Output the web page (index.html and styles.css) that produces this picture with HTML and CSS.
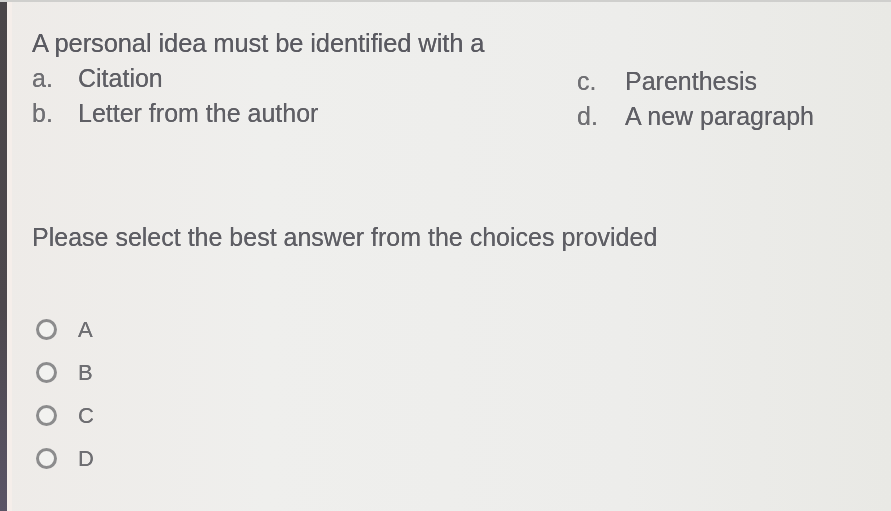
FILE: index.html
```html
<!DOCTYPE html>
<html lang="en">
<head>
<meta charset="utf-8">
<title>Question</title>
<link rel="stylesheet" href="styles.css">
</head>
<body>
<div class="frame">
  <div class="edge-dark"></div>
  <div class="edge-light"></div>
  <main class="main">
    <p class="question">A personal idea must be identified with a</p>
    <div class="options">
      <div class="col">
        <div class="opt"><span class="letter">a.</span><span class="text">Citation</span></div>
        <div class="opt"><span class="letter">b.</span><span class="text">Letter from the author</span></div>
      </div>
      <div class="col col-right">
        <div class="opt"><span class="letter">c.</span><span class="text">Parenthesis</span></div>
        <div class="opt"><span class="letter">d.</span><span class="text">A new paragraph</span></div>
      </div>
    </div>
    <p class="prompt">Please select the best answer from the choices provided</p>
    <ul class="choices">
      <li class="choice"><span class="radio"></span><span class="choice-label">A</span></li>
      <li class="choice"><span class="radio"></span><span class="choice-label">B</span></li>
      <li class="choice"><span class="radio"></span><span class="choice-label">C</span></li>
      <li class="choice"><span class="radio"></span><span class="choice-label">D</span></li>
    </ul>
  </main>
</div>
</body>
</html>
```
FILE: styles.css
```css
html, body {
  margin: 0;
  padding: 0;
}
body {
  width: 891px;
  height: 511px;
  overflow: hidden;
  background: #ecece9;
  font-family: "Liberation Sans", Arial, sans-serif;
}
.frame {
  display: flex;
  height: 511px;
  border-top: 2px solid #cfcfcd;
  box-sizing: border-box;
  background: linear-gradient(90deg, #eeebe8 0%, #efefed 30%, #ededeb 70%, #e9e9e5 100%);
}
.edge-dark {
  width: 7px;
  flex: none;
  background: linear-gradient(180deg, #4a4548 0%, #4d474c 60%, #5a5466 100%);
}
.edge-light {
  width: 5px;
  flex: none;
  background: #f5eeea;
}
.main {
  flex: 1;
  padding: 24px 0 0 20px;
  color: #5a5a61;
  filter: blur(0.5px);
  text-shadow: 0 0 0.6px currentColor;
}
.question {
  margin: 0;
  font-size: 25.5px;
  line-height: 35px;
  letter-spacing: -0.1px;
}
.options {
  display: grid;
  grid-template-columns: 545px 1fr;
}
.col-right {
  padding-top: 3px;
}
.opt {
  display: flex;
  font-size: 25px;
  line-height: 35px;
  color: #5f5f65;
}
.letter {
  width: 46px;
  flex: none;
  color: #707074;
}
.col-right .letter {
  width: 48px;
}
.prompt {
  margin: 86px 0 0;
  font-size: 25px;
  line-height: 35px;
  color: #5e5e64;
}
.choices {
  list-style: none;
  margin: 53px 0 0;
  padding: 0;
}
.choice {
  display: flex;
  align-items: center;
  height: 43px;
}
.radio {
  width: 15px;
  height: 15px;
  border: 3px solid #8c8c8d;
  border-radius: 50%;
  margin-left: 4px;
  flex: none;
  background: #f2f2f0;
}
.choice-label {
  margin-left: 21px;
  font-size: 22px;
  color: #6e6e72;
}
```
